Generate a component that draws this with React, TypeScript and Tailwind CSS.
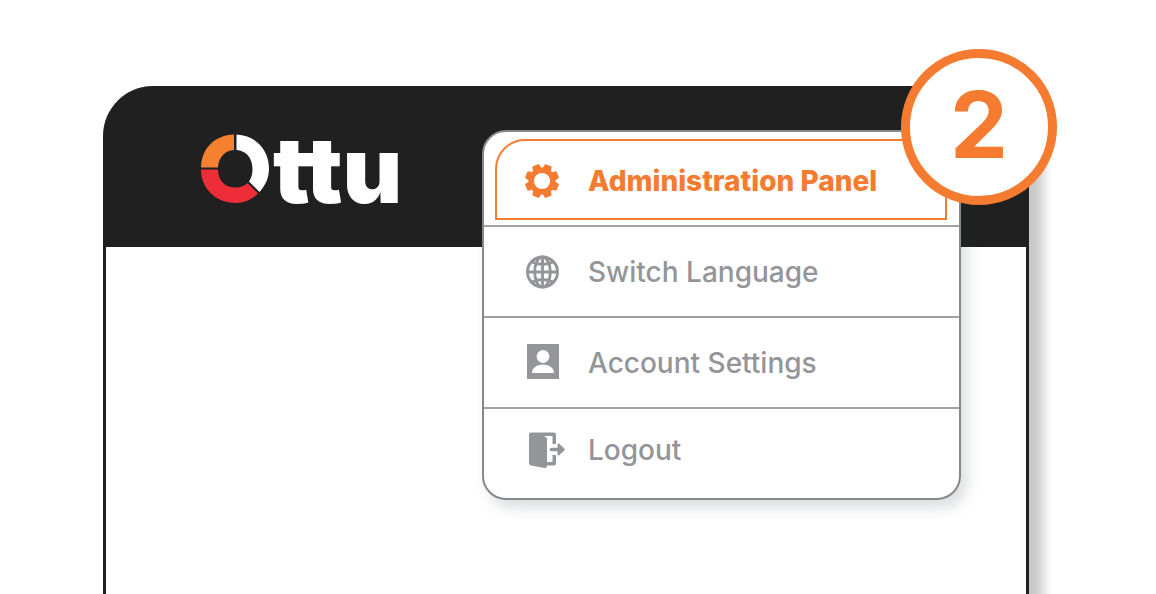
import type { ReactNode } from "react";

const TOOTH_ANGLES = [22.5, 67.5, 112.5, 157.5, 202.5, 247.5, 292.5, 337.5];

function GearIcon() {
  return (
    <svg viewBox="0 0 40 40" className="size-10" fill="currentColor" aria-hidden="true">
      {TOOTH_ANGLES.map((angle) => (
        <path
          key={angle}
          d="M14 10 L15.8 7 L16.2 4 Q16.4 3 17.4 3 H22.6 Q23.6 3 23.8 4 L24.2 7 L26 10 Z"
          transform={`rotate(${angle} 20 20)`}
        />
      ))}
      <circle cx="20" cy="20" r="10.8" fill="none" stroke="currentColor" strokeWidth="5.4" />
    </svg>
  );
}

function GlobeIcon() {
  return (
    <svg viewBox="0 0 40 40" className="size-10" fill="none" stroke="currentColor" strokeWidth="2.9" aria-hidden="true">
      <circle cx="20.5" cy="20" r="15" />
      <ellipse cx="20.5" cy="20" rx="7.8" ry="15" />
      <path d="M20.5 5V35M5.5 20H35.5M9 9.5Q20.5 15.5 32 9.5M9 30.5Q20.5 24.5 32 30.5" />
    </svg>
  );
}

function PersonIcon() {
  return (
    <svg viewBox="0 0 40 40" className="size-10" aria-hidden="true">
      <path fill="currentColor" d="M5 1H37V36H5Z" />
      <circle cx="21" cy="13.5" r="6.4" fill="#fff" />
      <path fill="#fff" d="M10 30C10 25 15 21.5 21 21.5S32 25 32 30Z" />
    </svg>
  );
}

function LogoutIcon() {
  return (
    <svg viewBox="0 0 40 40" className="size-10 overflow-visible" aria-hidden="true">
      <path fill="currentColor" d="M9 2.5H32Q34 2.5 34 4.5V14H30.5V6H22L25 8V36Q25 38.5 22.5 38L9 35.5Q7 35.1 7 33V4.5Q7 2.5 9 2.5Z" />
      <path fill="currentColor" d="M30.5 25H34V33.500Q34 35.500 32 35.500H24V32H30.5Z" />
      <path fill="none" stroke="currentColor" strokeWidth="3.6" strokeLinecap="round" d="M29.5 19.5H40" />
      <path fill="currentColor" stroke="currentColor" strokeWidth="2" strokeLinejoin="round" d="M36.5 14.500L41.800 19.500L36.5 24.500Z" />
    </svg>
  );
}

function Logo() {
  return (
    <a href="#" aria-label="Ottu" className="flex items-start gap-1">
      <svg viewBox="0 0 68 70" className="h-[70px] w-[68px]" aria-hidden="true">
        <path fill="#f58030" d="M33 0.5V16C24 16.5 17.5 23.5 17 33.5H0C0.5 14 14 1 33 0.5Z" />
        <path fill="#fff" d="M35.5 0.5C55 1.5 68 16 68 34.5C68 43.5 64.5 51.5 58.5 58L48 47.5C50.5 44 51.5 40 51.5 35C51.5 24 45 16.5 35.5 16Z" />
        <path fill="#ed2d37" d="M0 35.5H17C17 46.5 24 53.5 34 53.5C39.5 53.5 43.5 52 46.5 49L57 59.5C51 65.5 43.5 69 34.5 69C15 69 0 54.5 0 35.5Z" />
      </svg>
      <span className="font-['Inter',sans-serif] text-[92px] leading-[72px] font-black text-white">ttu</span>
    </a>
  );
}

function MenuItem({ icon, label }: { icon: ReactNode; label: string }) {
  return (
    <li className="group border-t-2 border-[#a0a1a4] last:pb-[7px]">
      <button
        type="button"
        className="flex h-[89px] w-full items-center gap-[26px] pl-[38px] text-left font-medium text-[#939598] group-last:h-[82px]"
      >
        {icon}
        <span>{label}</span>
      </button>
    </li>
  );
}

export default function App() {
  return (
    <main className="flex min-h-screen flex-col overflow-hidden bg-white pt-[86px] pr-[127px] pl-[103px] font-['Inter',sans-serif]">
      <section className="relative flex grow flex-col rounded-t-[50px] border-x-[3px] border-[#202020] bg-white shadow-[14px_24px_12px_rgba(0,0,0,0.22)]">
        <header className="-mx-px h-[161px] rounded-t-[48px] bg-[#202020] pt-12 pl-24">
          <Logo />
        </header>

        <nav
          aria-label="Account menu"
          className="absolute top-[44px] right-[65px] w-[479px] rounded-[24px] border-2 border-[#87888b] bg-white text-[28px] leading-9 shadow-[6px_8px_14px_rgba(40,50,60,0.16)]"
        >
          <ul>
            <li className="pt-[7px] pr-3 pb-[5px] pl-[11px]">
              <button
                type="button"
                className="flex h-[81px] w-full items-center gap-[26px] rounded-tl-[30px] border-2 border-[#f47b2f] pt-0.5 pl-[25px] text-left font-extrabold text-[#f47b2f]"
              >
                <GearIcon />
                <span>Administration Panel</span>
              </button>
            </li>
            <MenuItem icon={<GlobeIcon />} label="Switch Language" />
            <MenuItem icon={<PersonIcon />} label="Account Settings" />
            <MenuItem icon={<LogoutIcon />} label="Logout" />
          </ul>
          <span className="absolute -top-[83px] -right-[98px] flex size-[156px] items-center justify-center rounded-full border-[9px] border-[#f47b2f] bg-white pb-1 text-[92px] leading-none font-bold text-[#f47b2f]">
            2
          </span>
        </nav>
      </section>
    </main>
  );
}
